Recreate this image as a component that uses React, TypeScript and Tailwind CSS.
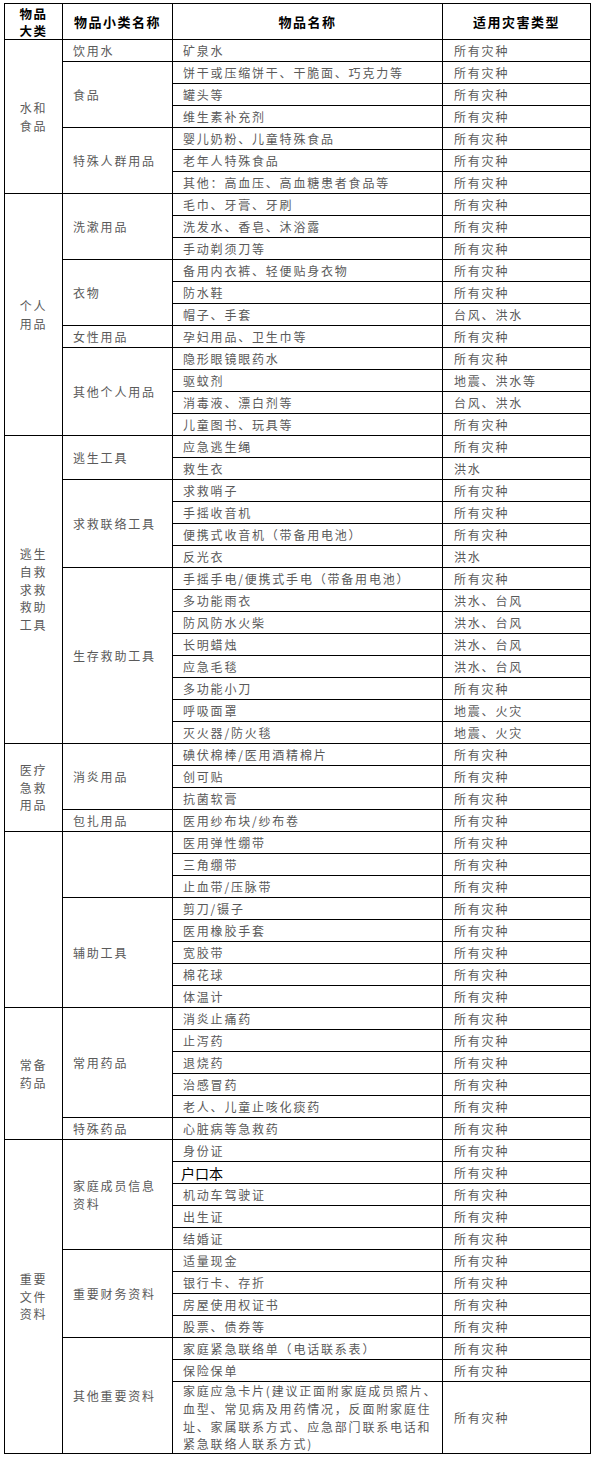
const ALL = "所有灾种";

type Item = { name: string[]; hazard: string; plain?: boolean };
type Sub = { label: string[]; items: Item[] };
type Group = { label: string[]; subs: Sub[] };

const it = (name: string, hazard: string = ALL): Item => ({ name: [name], hazard });

const groups: Group[] = [
  {
    label: ["水和", "食品"],
    subs: [
      { label: ["饮用水"], items: [it("矿泉水")] },
      {
        label: ["食品"],
        items: [it("饼干或压缩饼干、干脆面、巧克力等"), it("罐头等"), it("维生素补充剂")],
      },
      {
        label: ["特殊人群用品"],
        items: [it("婴儿奶粉、儿童特殊食品"), it("老年人特殊食品"), it("其他：高血压、高血糖患者食品等")],
      },
    ],
  },
  {
    label: ["个人", "用品"],
    subs: [
      { label: ["洗漱用品"], items: [it("毛巾、牙膏、牙刷"), it("洗发水、香皂、沐浴露"), it("手动剃须刀等")] },
      { label: ["衣物"], items: [it("备用内衣裤、轻便贴身衣物"), it("防水鞋"), it("帽子、手套", "台风、洪水")] },
      { label: ["女性用品"], items: [it("孕妇用品、卫生巾等")] },
      {
        label: ["其他个人用品"],
        items: [
          it("隐形眼镜眼药水"),
          it("驱蚊剂", "地震、洪水等"),
          it("消毒液、漂白剂等", "台风、洪水"),
          it("儿童图书、玩具等"),
        ],
      },
    ],
  },
  {
    label: ["逃生", "自救", "求救", "救助", "工具"],
    subs: [
      { label: ["逃生工具"], items: [it("应急逃生绳"), it("救生衣", "洪水")] },
      {
        label: ["求救联络工具"],
        items: [it("求救哨子"), it("手摇收音机"), it("便携式收音机（带备用电池）"), it("反光衣", "洪水")],
      },
      {
        label: ["生存救助工具"],
        items: [
          it("手摇手电/便携式手电（带备用电池）"),
          it("多功能雨衣", "洪水、台风"),
          it("防风防水火柴", "洪水、台风"),
          it("长明蜡烛", "洪水、台风"),
          it("应急毛毯", "洪水、台风"),
          it("多功能小刀"),
          it("呼吸面罩", "地震、火灾"),
          it("灭火器/防火毯", "地震、火灾"),
        ],
      },
    ],
  },
  {
    label: ["医疗", "急救", "用品"],
    subs: [
      { label: ["消炎用品"], items: [it("碘伏棉棒/医用酒精棉片"), it("创可贴"), it("抗菌软膏")] },
      { label: ["包扎用品"], items: [it("医用纱布块/纱布卷")] },
    ],
  },
  {
    label: [],
    subs: [
      { label: [], items: [it("医用弹性绷带"), it("三角绷带"), it("止血带/压脉带")] },
      {
        label: ["辅助工具"],
        items: [it("剪刀/镊子"), it("医用橡胶手套"), it("宽胶带"), it("棉花球"), it("体温计")],
      },
    ],
  },
  {
    label: ["常备", "药品"],
    subs: [
      {
        label: ["常用药品"],
        items: [it("消炎止痛药"), it("止泻药"), it("退烧药"), it("治感冒药"), it("老人、儿童止咳化痰药")],
      },
      { label: ["特殊药品"], items: [it("心脏病等急救药")] },
    ],
  },
  {
    label: ["重要", "文件", "资料"],
    subs: [
      {
        label: ["家庭成员信息", "资料"],
        items: [
          it("身份证"),
          { name: ["户口本"], hazard: ALL, plain: true },
          it("机动车驾驶证"),
          it("出生证"),
          it("结婚证"),
        ],
      },
      {
        label: ["重要财务资料"],
        items: [it("适量现金"), it("银行卡、存折"), it("房屋使用权证书"), it("股票、债券等")],
      },
      {
        label: ["其他重要资料"],
        items: [
          it("家庭紧急联络单（电话联系表）"),
          it("保险保单"),
          {
            name: [
              "家庭应急卡片(建议正面附家庭成员照片、",
              "血型、常见病及用药情况，反面附家庭住",
              "址、家属联系方式、应急部门联系电话和",
              "紧急联络人联系方式)",
            ],
            hazard: ALL,
          },
        ],
      },
    ],
  },
];

const cell = "border border-black align-middle";

export default function App() {
  const rows: React.ReactNode[] = [];
  groups.forEach((g, gi) => {
    const total = g.subs.reduce((n, s) => n + s.items.length, 0);
    g.subs.forEach((s, si) => {
      s.items.forEach((item, ii) => {
        const multi = item.name.length > 1;
        rows.push(
          <tr key={`${gi}-${si}-${ii}`} className={multi ? "h-[72px]" : "h-[22px]"}>
            {si === 0 && ii === 0 && (
              <td rowSpan={total} className={`${cell} text-center leading-[17.7px]`}>
                {g.label.map((l) => (
                  <div key={l}>{l}</div>
                ))}
              </td>
            )}
            {ii === 0 && (
              <td rowSpan={s.items.length} className={`${cell} pl-[10px] leading-[18px]`}>
                {s.label.map((l) => (
                  <div key={l}>{l}</div>
                ))}
              </td>
            )}
            <td
              className={
                item.plain
                  ? `${cell} pl-[8px] text-[14px] tracking-normal text-black leading-[20px]`
                  : `${cell} pl-[10px] leading-[17.7px]`
              }
            >
              {item.name.map((l) => (
                <div key={l}>{l}</div>
              ))}
            </td>
            <td className={`${cell} pl-[11px]`}>{item.hazard}</td>
          </tr>
        );
      });
    });
  });

  return (
    <div className="min-h-screen bg-white pt-[3px] pl-[4px] font-['Noto_Sans_CJK_SC',sans-serif]">
      <table className="w-[586px] table-fixed border-collapse border border-black text-[12px] tracking-[1.8px] text-[#5a5a5a]">
        <colgroup>
          <col className="w-[58px]" />
          <col className="w-[110px]" />
          <col className="w-[270px]" />
          <col className="w-[148px]" />
        </colgroup>
        <thead>
          <tr className="h-[36px] text-[13px] font-bold tracking-[1.5px] text-black">
            <th className={`${cell} p-0 text-[12.5px] leading-[17px]`}>
              <div>物品</div>
              <div>大类</div>
            </th>
            <th className={cell}>物品小类名称</th>
            <th className={cell}>物品名称</th>
            <th className={cell}>适用灾害类型</th>
          </tr>
        </thead>
        <tbody>{rows}</tbody>
      </table>
    </div>
  );
}
